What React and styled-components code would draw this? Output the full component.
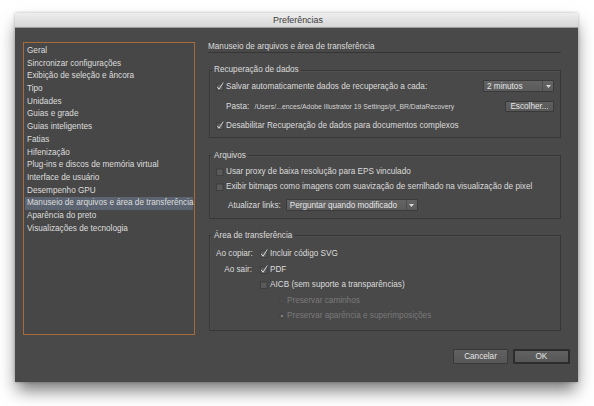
import React from "react";
import styled, { createGlobalStyle } from "styled-components";

const GlobalStyle = createGlobalStyle`
	html, body {
		margin: 0;
		padding: 0;
		background: #ffffff;
	}

	body {
		font-family: "Liberation Sans", Arial, sans-serif;
		-webkit-font-smoothing: antialiased;
	}
`;

const Stage = styled.div`
	width: 594px;
	height: 406px;
	box-sizing: border-box;
	padding: 13px 0 0 15px;
	overflow: hidden;
`;

const Window = styled.div`
	width: 563px;
	height: 369px;
	display: flex;
	flex-direction: column;
	background: #494949;
	box-shadow: 0 10px 16px -2px rgba(0, 0, 0, 0.55), 0 0 3px rgba(0, 0, 0, 0.25);
`;

const TitleBar = styled.div`
	flex: none;
	height: 15px;
	box-sizing: border-box;
	padding-left: 3px;
	background: linear-gradient(#eeeeee, #d6d6d6);
	border-bottom: 1px solid #9c9c9c;
	color: #3c3c3c;
	font-size: 8.9px;
	line-height: 14px;
	text-align: center;
`;

const Body = styled.div`
	display: flex;
	gap: 13px;
	height: 293px;
	padding: 14px 17px 0 8px;
`;

const NavList = styled.ul`
	flex: none;
	width: 172px;
	height: 293px;
	box-sizing: border-box;
	margin: 0;
	padding: 2px 1px 1px;
	list-style: none;
	border: 1px solid #a86a36;
	background: #474747;
`;

const NavItem = styled.li`
	height: 12.7px;
	line-height: 12.7px;
	padding-left: 2px;
	font-size: 8.2px;
	color: #dedede;
	white-space: nowrap;
	background: ${({ $active }) => ($active ? "#5b6470" : "transparent")};
`;

const Content = styled.div`
	width: 353px;
	display: flex;
	flex-direction: column;
	color: #dcdcdc;
	font-size: 8.2px;
`;

const SectionTitle = styled.div`
	height: 10px;
	line-height: 10px;
	border-bottom: 1px solid #353535;
	white-space: nowrap;
`;

const Group = styled.fieldset`
	margin: ${({ $mt }) => $mt}px 0 0 1px;
	padding: ${({ $pt }) => $pt}px 6px ${({ $pb }) => $pb}px;
	border: 1px solid #373737;
	box-shadow: inset 1px 1px 0 #4f4f4f;
	min-width: 0;
`;

const Legend = styled.legend`
	margin-left: -4px;
	padding: 0 2px;
	line-height: 12px;
	font-size: 8.2px;
	color: #dcdcdc;
`;

const Row = styled.div`
	display: flex;
	align-items: center;
	height: ${({ $h }) => $h || 14}px;
	margin-top: ${({ $mt }) => $mt || 0}px;
	padding-left: ${({ $indent }) => $indent || 0}px;
	white-space: nowrap;
	color: ${({ $disabled }) => ($disabled ? "#7a7a7a" : "#dcdcdc")};
`;

const FieldLabel = styled.span`
	flex: none;
	width: ${({ $w }) => $w}px;
	text-align: ${({ $right }) => ($right ? "right" : "left")};
	margin-right: ${({ $gap }) => $gap || 0}px;
`;

const PathText = styled.span`
	font-size: 6.85px;
	color: #d4d4d4;
`;

const CheckIcon = styled.svg`
	flex: none;
	width: 8px;
	height: 9px;
	margin-right: 2px;
	overflow: visible;
`;

const RadioIcon = styled.svg`
	flex: none;
	width: 6px;
	height: 6px;
	margin-right: 2px;
`;

const Select = styled.div`
	display: flex;
	align-items: center;
	width: ${({ $w }) => $w}px;
	height: ${({ $h }) => $h || 12}px;
	box-sizing: border-box;
	margin-left: ${({ $auto }) => ($auto ? "auto" : "0")};
	background: linear-gradient(#646464, #5a5a5a);
	border: 1px solid #3a3a3a;
	border-radius: 1px;
	color: #e6e6e6;
	font-size: 8.2px;
`;

const SelectText = styled.span`
	flex: 1;
	padding-left: 3px;
`;

const SelectArrow = styled.span`
	flex: none;
	width: 10px;
	height: 100%;
	display: flex;
	align-items: center;
	justify-content: center;
	border-left: 1px solid #4c4c4c;
`;

const Button = styled.div`
	display: flex;
	align-items: center;
	justify-content: center;
	width: ${({ $w }) => $w}px;
	height: ${({ $h }) => $h}px;
	box-sizing: border-box;
	margin-left: ${({ $auto }) => ($auto ? "auto" : "0")};
	background: linear-gradient(#616161, #575757);
	border: ${({ $default }) => ($default ? "2px solid #2c2c2c" : "1px solid #393939")};
	border-radius: 1px;
	color: #e4e4e4;
	font-size: 8.2px;
`;

const Footer = styled.div`
	display: flex;
	justify-content: flex-end;
	gap: 4.4px;
	padding: 14px 8px 0 0;
`;

function Check({ checked }) {
	return (
		<CheckIcon viewBox="0 0 8 9">
			<rect x="0.5" y="2" width="6.5" height="6.5" fill="#5a5a5a" stroke="#3a3a3a" strokeWidth="0.8" />
			{checked && (
				<path d="M1.5 5.2 L3 7.2 L7 1" fill="none" stroke="#ececec" strokeWidth="0.85" strokeLinecap="round" />
			)}
		</CheckIcon>
	);
}

function Radio({ selected }) {
	return (
		<RadioIcon viewBox="0 0 6 6">
			<circle cx="3" cy="3" r="2.6" fill="#4d4d4d" stroke="#424242" strokeWidth="0.6" />
			{selected && <circle cx="3" cy="3" r="1.1" fill="#8a8a8a" />}
		</RadioIcon>
	);
}

function Dropdown({ width, height, auto, children }) {
	return (
		<Select $w={width} $h={height} $auto={auto}>
			<SelectText>{children}</SelectText>
			<SelectArrow>
				<svg width="5" height="3" viewBox="0 0 5 3">
					<path d="M0 0 H5 L2.5 3 Z" fill="#d8d8d8" />
				</svg>
			</SelectArrow>
		</Select>
	);
}

const sections = [
	"Geral",
	"Sincronizar configurações",
	"Exibição de seleção e âncora",
	"Tipo",
	"Unidades",
	"Guias e grade",
	"Guias inteligentes",
	"Fatias",
	"Hifenização",
	"Plug-ins e discos de memória virtual",
	"Interface de usuário",
	"Desempenho GPU",
	"Manuseio de arquivos e área de transferência",
	"Aparência do preto",
	"Visualizações de tecnologia",
];

export default function App() {
	const active = "Manuseio de arquivos e área de transferência";

	return (
		<>
			<GlobalStyle />
			<Stage>
				<Window>
					<TitleBar>Preferências</TitleBar>
					<Body>
						<NavList>
							{sections.map((s) => (
								<NavItem key={s} $active={s === active}>{s}</NavItem>
							))}
						</NavList>

						<Content>
							<SectionTitle>Manuseio de arquivos e área de transferência</SectionTitle>

							<Group $mt={11} $pt={3} $pb={5}>
								<Legend>Recuperação de dados</Legend>
								<Row>
									<Check checked />
									Salvar automaticamente dados de recuperação a cada:
									<Dropdown width={71} auto>2 minutos</Dropdown>
								</Row>
								<Row $mt={6.5} $indent={10}>
									<FieldLabel $w={28.5}>Pasta:</FieldLabel>
									<PathText>/Users/...ences/Adobe Illustrator 19 Settings/pt_BR/DataRecovery</PathText>
									<Button $w={49} $h={11} $auto>Escolher...</Button>
								</Row>
								<Row $mt={4.5}>
									<Check checked />
									Desabilitar Recuperação de dados para documentos complexos
								</Row>
							</Group>

							<Group $mt={11.5} $pt={3} $pb={5.7}>
								<Legend>Arquivos</Legend>
								<Row>
									<Check />
									Usar proxy de baixa resolução para EPS vinculado
								</Row>
								<Row $mt={1.1}>
									<Check />
									Exibir bitmaps como imagens com suavização de serrilhado na visualização de pixel
								</Row>
								<Row $mt={4.6} $indent={12}>
									<FieldLabel $w={57.7}>Atualizar links:</FieldLabel>
									<Dropdown width={132} height={11.5}>Perguntar quando modificado</Dropdown>
								</Row>
							</Group>

							<Group $mt={11} $pt={3.8} $pb={7}>
								<Legend>Área de transferência</Legend>
								<Row $h={15}>
									<FieldLabel $w={36} $gap={8} $right>Ao copiar:</FieldLabel>
									<Check checked />
									Incluir código SVG
								</Row>
								<Row $h={15} $mt={1}>
									<FieldLabel $w={36} $gap={8} $right>Ao sair:</FieldLabel>
									<Check checked />
									PDF
								</Row>
								<Row $h={15} $indent={44}>
									<Check />
									AICB (sem suporte a transparências)
								</Row>
								<Row $h={15} $mt={1.5} $indent={63} $disabled>
									<Radio />
									Preservar caminhos
								</Row>
								<Row $h={15} $mt={0.3} $indent={63} $disabled>
									<Radio selected />
									Preservar aparência e superimposições
								</Row>
							</Group>
						</Content>
					</Body>

					<Footer>
						<Button $w={55.6} $h={15}>Cancelar</Button>
						<Button $w={57.3} $h={15} $default>OK</Button>
					</Footer>
				</Window>
			</Stage>
		</>
	);
}
